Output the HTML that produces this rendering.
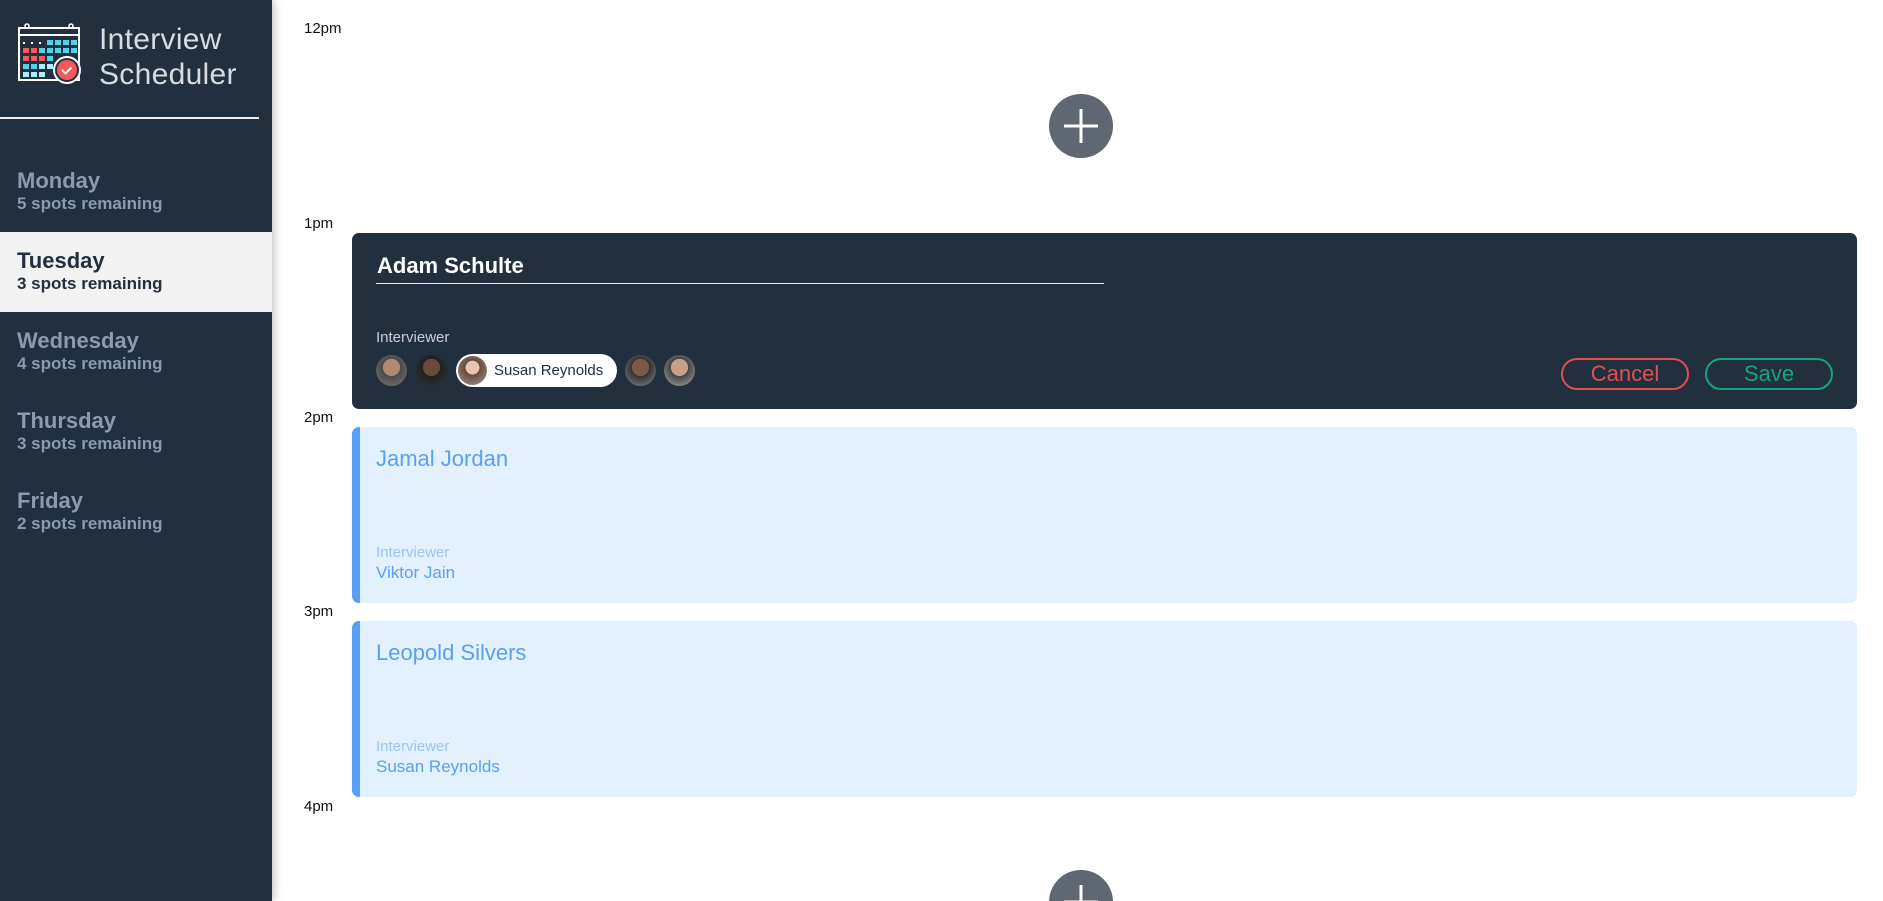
<!DOCTYPE html>
<html><head><meta charset="utf-8"><style>
*{margin:0;padding:0;box-sizing:border-box}
html,body{width:1883px;height:901px;overflow:hidden}
body{background:#fff;font-family:"Liberation Sans",sans-serif;position:relative}
#w{position:absolute;left:0;top:0;width:1883px;height:901px;overflow:hidden}
.side{position:absolute;left:0;top:0;width:272px;height:901px;background:#222f3e;box-shadow:2px 0 8px rgba(0,0,0,.25);z-index:2}
.title{position:absolute;left:99px;top:22px;color:#d8dce0;font-size:30px;font-weight:300;line-height:35px;letter-spacing:.3px}
.hr{position:absolute;left:0;top:117px;width:259px;height:2px;background:#f0f0f0}
.day{position:absolute;left:0;width:272px;height:80px;padding:16px 0 0 17px;color:#8a9bb0}
.day b{display:block;font-size:22px;line-height:26px}
.day span{display:block;font-size:17px;font-weight:bold;line-height:20px}
.day.act{background:#f2f2f2;color:#222f3e}
.t{position:absolute;left:304px;font-size:15px;color:#111}
.plus{position:absolute;width:64px;height:64px;border-radius:50%;background:#5f6772}
.plus:before,.plus:after{content:"";position:absolute;background:#fff;left:50%;top:50%;transform:translate(-50%,-50%)}
.plus:before{width:34px;height:3px}.plus:after{width:3px;height:34px}
.card{position:absolute;left:352px;width:1505px;border-radius:7px}
.dark{background:#222f3e;top:233px;height:176px}
.lite{background:#e3f0fe;border-left:8px solid #56a0fb;height:176px}
.lite .n{position:absolute;left:16px;top:19px;font-size:22px;color:#5a9ff0}
.lite .l{position:absolute;left:16px;top:117px;font-size:15px;color:#9ac4f6}
.lite .v{position:absolute;left:16px;top:136px;font-size:17px;color:#5a9ff0}
.av{position:absolute;top:355px;width:31px;height:31px;border-radius:50%;background:radial-gradient(circle at 50% 40%,#b08a70 0 35%,#4a4a4a 36%,#777 100%)}
.btn{position:absolute;top:358px;width:128px;height:32px;border-radius:16px;border:2px solid;font-size:22px;text-align:center;line-height:28px}
</style></head><body><div id="w">
<div class="side">
<svg style="position:absolute;left:17px;top:23px" width="66" height="62" viewBox="0 0 66 62">
<rect x="2" y="5" width="60" height="52" fill="none" stroke="#fff" stroke-width="2"/>
<line x1="2" y1="12" x2="62" y2="12" stroke="#fff" stroke-width="2"/>
<circle cx="10" cy="3" r="2" fill="none" stroke="#fff" stroke-width="1.5"/><circle cx="54" cy="3" r="2" fill="none" stroke="#fff" stroke-width="1.5"/>
<g fill="#fff"><rect x="6" y="19" width="2" height="2"/><rect x="14" y="19" width="2" height="2"/><rect x="22" y="19" width="2" height="2"/></g>
<g fill="#4fd2ee"><rect x="30" y="17" width="6" height="5"/><rect x="38" y="17" width="6" height="5"/><rect x="46" y="17" width="6" height="5"/><rect x="54" y="17" width="6" height="5"/>
<rect x="22" y="25" width="6" height="5"/><rect x="30" y="25" width="6" height="5"/><rect x="38" y="25" width="6" height="5"/><rect x="46" y="25" width="6" height="5"/><rect x="54" y="25" width="6" height="5"/>
<rect x="30" y="33" width="6" height="5"/><rect x="6" y="41" width="6" height="5"/><rect x="14" y="41" width="6" height="5"/></g>
<g fill="#f05a5a"><rect x="6" y="25" width="6" height="5"/><rect x="14" y="25" width="6" height="5"/><rect x="6" y="33" width="6" height="5"/><rect x="14" y="33" width="6" height="5"/><rect x="22" y="33" width="6" height="5"/></g>
<g fill="#a8f0fb"><rect x="22" y="41" width="6" height="5"/><rect x="30" y="41" width="6" height="5"/><rect x="6" y="49" width="6" height="5"/><rect x="14" y="49" width="6" height="5"/><rect x="22" y="49" width="6" height="5"/></g>
<circle cx="50" cy="47" r="13" fill="#222f3e" stroke="#fff" stroke-width="2"/><circle cx="50" cy="47" r="10" fill="#f05a5a"/>
<path d="M45 47 l3.5 3.5 l6-6" fill="none" stroke="#fff" stroke-width="2"/>
</svg>
<div class="title">Interview<br>Scheduler</div>
<div class="hr"></div>
<div class="day" style="top:152px"><b>Monday</b><span>5 spots remaining</span></div>
<div class="day act" style="top:232px"><b>Tuesday</b><span>3 spots remaining</span></div>
<div class="day" style="top:312px"><b>Wednesday</b><span>4 spots remaining</span></div>
<div class="day" style="top:392px"><b>Thursday</b><span>3 spots remaining</span></div>
<div class="day" style="top:472px"><b>Friday</b><span>2 spots remaining</span></div>
</div>
<div class="t" style="top:20px">12pm</div>
<div class="t" style="top:215px">1pm</div>
<div class="t" style="top:409px">2pm</div>
<div class="t" style="top:603px">3pm</div>
<div class="t" style="top:798px">4pm</div>
<div class="plus" style="left:1049px;top:94px"></div>
<div class="plus" style="left:1049px;top:870px"></div>
<div class="card dark">
<div style="position:absolute;left:25px;top:20px;font-size:22px;font-weight:bold;color:#fff">Adam Schulte</div>
<div style="position:absolute;left:24px;top:50px;width:728px;height:1px;background:#eee"></div>
<div style="position:absolute;left:24px;top:96px;font-size:15px;color:#ccd;font-weight:300">Interviewer</div>
</div>
<div class="av" style="left:376px"></div>
<div class="av" style="left:416px;background:radial-gradient(circle at 50% 40%,#6a4a3a 0 35%,#222 36%,#333 100%)"></div>
<div style="position:absolute;left:456px;top:354px;width:161px;height:33px;border-radius:17px;background:#fff">
<div style="position:absolute;left:2px;top:2px;width:29px;height:29px;border-radius:50%;background:radial-gradient(circle at 50% 40%,#e6c6b0 0 30%,#6b4a3a 31%,#999 100%)"></div>
<div style="position:absolute;left:38px;top:8px;font-size:15px;color:#222f3e">Susan Reynolds</div></div>
<div class="av" style="left:625px;background:radial-gradient(circle at 50% 40%,#7a5a48 0 35%,#333 36%,#888 100%)"></div>
<div class="av" style="left:664px;background:radial-gradient(circle at 50% 40%,#c8a088 0 35%,#444 36%,#aaa 100%)"></div>
<div class="btn" style="left:1561px;border-color:#e24f4f;color:#e24f4f">Cancel</div>
<div class="btn" style="left:1705px;border-color:#15a57e;color:#15a57e">Save</div>
<div class="card lite" style="top:427px"><div class="n">Jamal Jordan</div><div class="l">Interviewer</div><div class="v">Viktor Jain</div></div>
<div class="card lite" style="top:621px"><div class="n">Leopold Silvers</div><div class="l">Interviewer</div><div class="v">Susan Reynolds</div></div>
</div></body></html>
